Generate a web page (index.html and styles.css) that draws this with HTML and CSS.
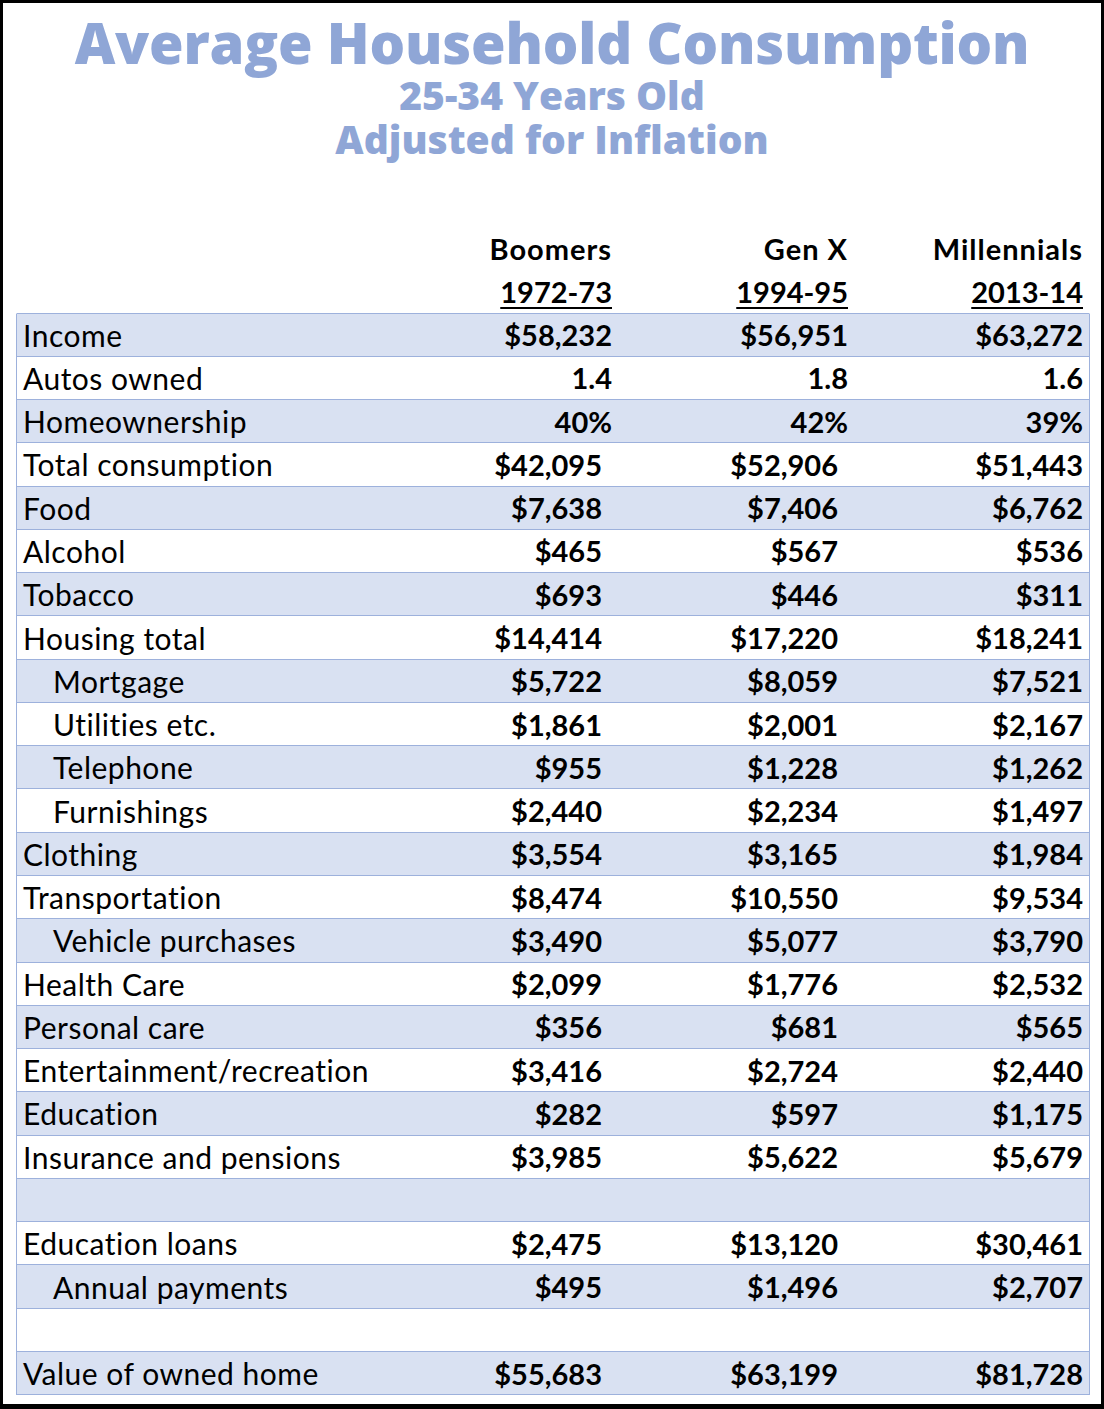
FILE: index.html
```html
<!DOCTYPE html>
<html>
<head>
<meta charset="utf-8">
<link rel="stylesheet" href="styles.css">
</head>
<body>
<div class="frame">
  <header class="titles">
    <h1 class="title">Average Household Consumption</h1>
    <p class="subtitle">25-34 Years Old</p>
    <p class="subtitle">Adjusted for Inflation</p>
  </header>
  <div class="table">
    <div class="row head">
      <div class="label"></div><div class="val">Boomers</div><div class="val">Gen X</div><div class="val">Millennials</div>
    </div>
    <div class="row head years">
      <div class="label"></div><div class="val"><u>1972-73</u></div><div class="val"><u>1994-95</u></div><div class="val"><u>2013-14</u></div>
    </div>
    <div class="row band first"><div class="label">Income</div><div class="val">$58,232</div><div class="val">$56,951</div><div class="val">$63,272</div></div>
    <div class="row"><div class="label">Autos owned</div><div class="val">1.4</div><div class="val">1.8</div><div class="val">1.6</div></div>
    <div class="row band"><div class="label">Homeownership</div><div class="val">40%</div><div class="val">42%</div><div class="val">39%</div></div>
    <div class="row acct"><div class="label">Total consumption</div><div class="val">$42,095</div><div class="val">$52,906</div><div class="val">$51,443</div></div>
    <div class="row band acct"><div class="label">Food</div><div class="val">$7,638</div><div class="val">$7,406</div><div class="val">$6,762</div></div>
    <div class="row acct"><div class="label">Alcohol</div><div class="val">$465</div><div class="val">$567</div><div class="val">$536</div></div>
    <div class="row band acct"><div class="label">Tobacco</div><div class="val">$693</div><div class="val">$446</div><div class="val">$311</div></div>
    <div class="row acct"><div class="label">Housing total</div><div class="val">$14,414</div><div class="val">$17,220</div><div class="val">$18,241</div></div>
    <div class="row band acct"><div class="label sub">Mortgage</div><div class="val">$5,722</div><div class="val">$8,059</div><div class="val">$7,521</div></div>
    <div class="row acct"><div class="label sub">Utilities etc.</div><div class="val">$1,861</div><div class="val">$2,001</div><div class="val">$2,167</div></div>
    <div class="row band acct"><div class="label sub">Telephone</div><div class="val">$955</div><div class="val">$1,228</div><div class="val">$1,262</div></div>
    <div class="row acct"><div class="label sub">Furnishings</div><div class="val">$2,440</div><div class="val">$2,234</div><div class="val">$1,497</div></div>
    <div class="row band acct"><div class="label">Clothing</div><div class="val">$3,554</div><div class="val">$3,165</div><div class="val">$1,984</div></div>
    <div class="row acct"><div class="label">Transportation</div><div class="val">$8,474</div><div class="val">$10,550</div><div class="val">$9,534</div></div>
    <div class="row band acct"><div class="label sub">Vehicle purchases</div><div class="val">$3,490</div><div class="val">$5,077</div><div class="val">$3,790</div></div>
    <div class="row acct"><div class="label">Health Care</div><div class="val">$2,099</div><div class="val">$1,776</div><div class="val">$2,532</div></div>
    <div class="row band acct"><div class="label">Personal care</div><div class="val">$356</div><div class="val">$681</div><div class="val">$565</div></div>
    <div class="row acct"><div class="label">Entertainment/recreation</div><div class="val">$3,416</div><div class="val">$2,724</div><div class="val">$2,440</div></div>
    <div class="row band acct"><div class="label">Education</div><div class="val">$282</div><div class="val">$597</div><div class="val">$1,175</div></div>
    <div class="row acct"><div class="label">Insurance and pensions</div><div class="val">$3,985</div><div class="val">$5,622</div><div class="val">$5,679</div></div>
    <div class="row band acct"><div class="label"></div><div class="val"></div><div class="val"></div><div class="val"></div></div>
    <div class="row acct"><div class="label">Education loans</div><div class="val">$2,475</div><div class="val">$13,120</div><div class="val">$30,461</div></div>
    <div class="row band acct"><div class="label sub">Annual payments</div><div class="val">$495</div><div class="val">$1,496</div><div class="val">$2,707</div></div>
    <div class="row acct"><div class="label"></div><div class="val"></div><div class="val"></div><div class="val"></div></div>
    <div class="row band acct last"><div class="label">Value of owned home</div><div class="val">$55,683</div><div class="val">$63,199</div><div class="val">$81,728</div></div>
  </div>
</div>
</body>
</html>
```
FILE: styles.css
```css
* { box-sizing: border-box; }
html, body { margin: 0; padding: 0; background: #ffffff; }
.frame {
  width: 1104px;
  height: 1409px;
  border-style: solid;
  border-color: #000;
  border-width: 3px 3px 5px 3px;
  background: #fff;
  overflow: hidden;
}
.titles {
  height: 224px;
  display: flex;
  flex-direction: column;
  align-items: center;
  color: #8fa6d6;
  font-family: "Open Sans", sans-serif;
}
.title {
  margin: 0;
  margin-top: 8px;
  font-size: 56px;
  font-weight: 800;
  line-height: 62px;
  letter-spacing: -0.2px;
}
.subtitle {
  margin: 0;
  font-size: 39px;
  font-weight: 800;
  line-height: 44px;
}
.table {
  margin-left: 13px;
  width: 1074px;
  font-family: "Lato", sans-serif;
  color: #000;
}
.row {
  display: grid;
  grid-template-columns: 1fr 236px 236px 235px;
  height: 43.28px;
  align-items: center;
  padding-right: 6px;
  font-size: 30px;
  border-left: 1px solid #9db1dc;
  border-right: 1px solid #9db1dc;
  border-bottom: 1px solid #9db1dc;
}
.row.head {
  border-left: 1px solid transparent;
  border-right: 1px solid transparent;
  border-bottom: 1px solid transparent;
}
.row.years { border-bottom: 1px solid #9db1dc; }
.row.band { background: #d9e1f2; }
.label { padding-left: 6px; white-space: nowrap; letter-spacing: 0.5px; }
.label.sub { padding-left: 36px; }
.val { text-align: right; font-weight: 700; white-space: nowrap; font-size: 29px; }
.head .val { letter-spacing: 1px; }
.years .val { letter-spacing: 0; }
.head u { text-decoration-thickness: 2px; text-underline-offset: 4px; }
.acct .val:nth-child(2), .acct .val:nth-child(3) { padding-right: 10px; }
```
